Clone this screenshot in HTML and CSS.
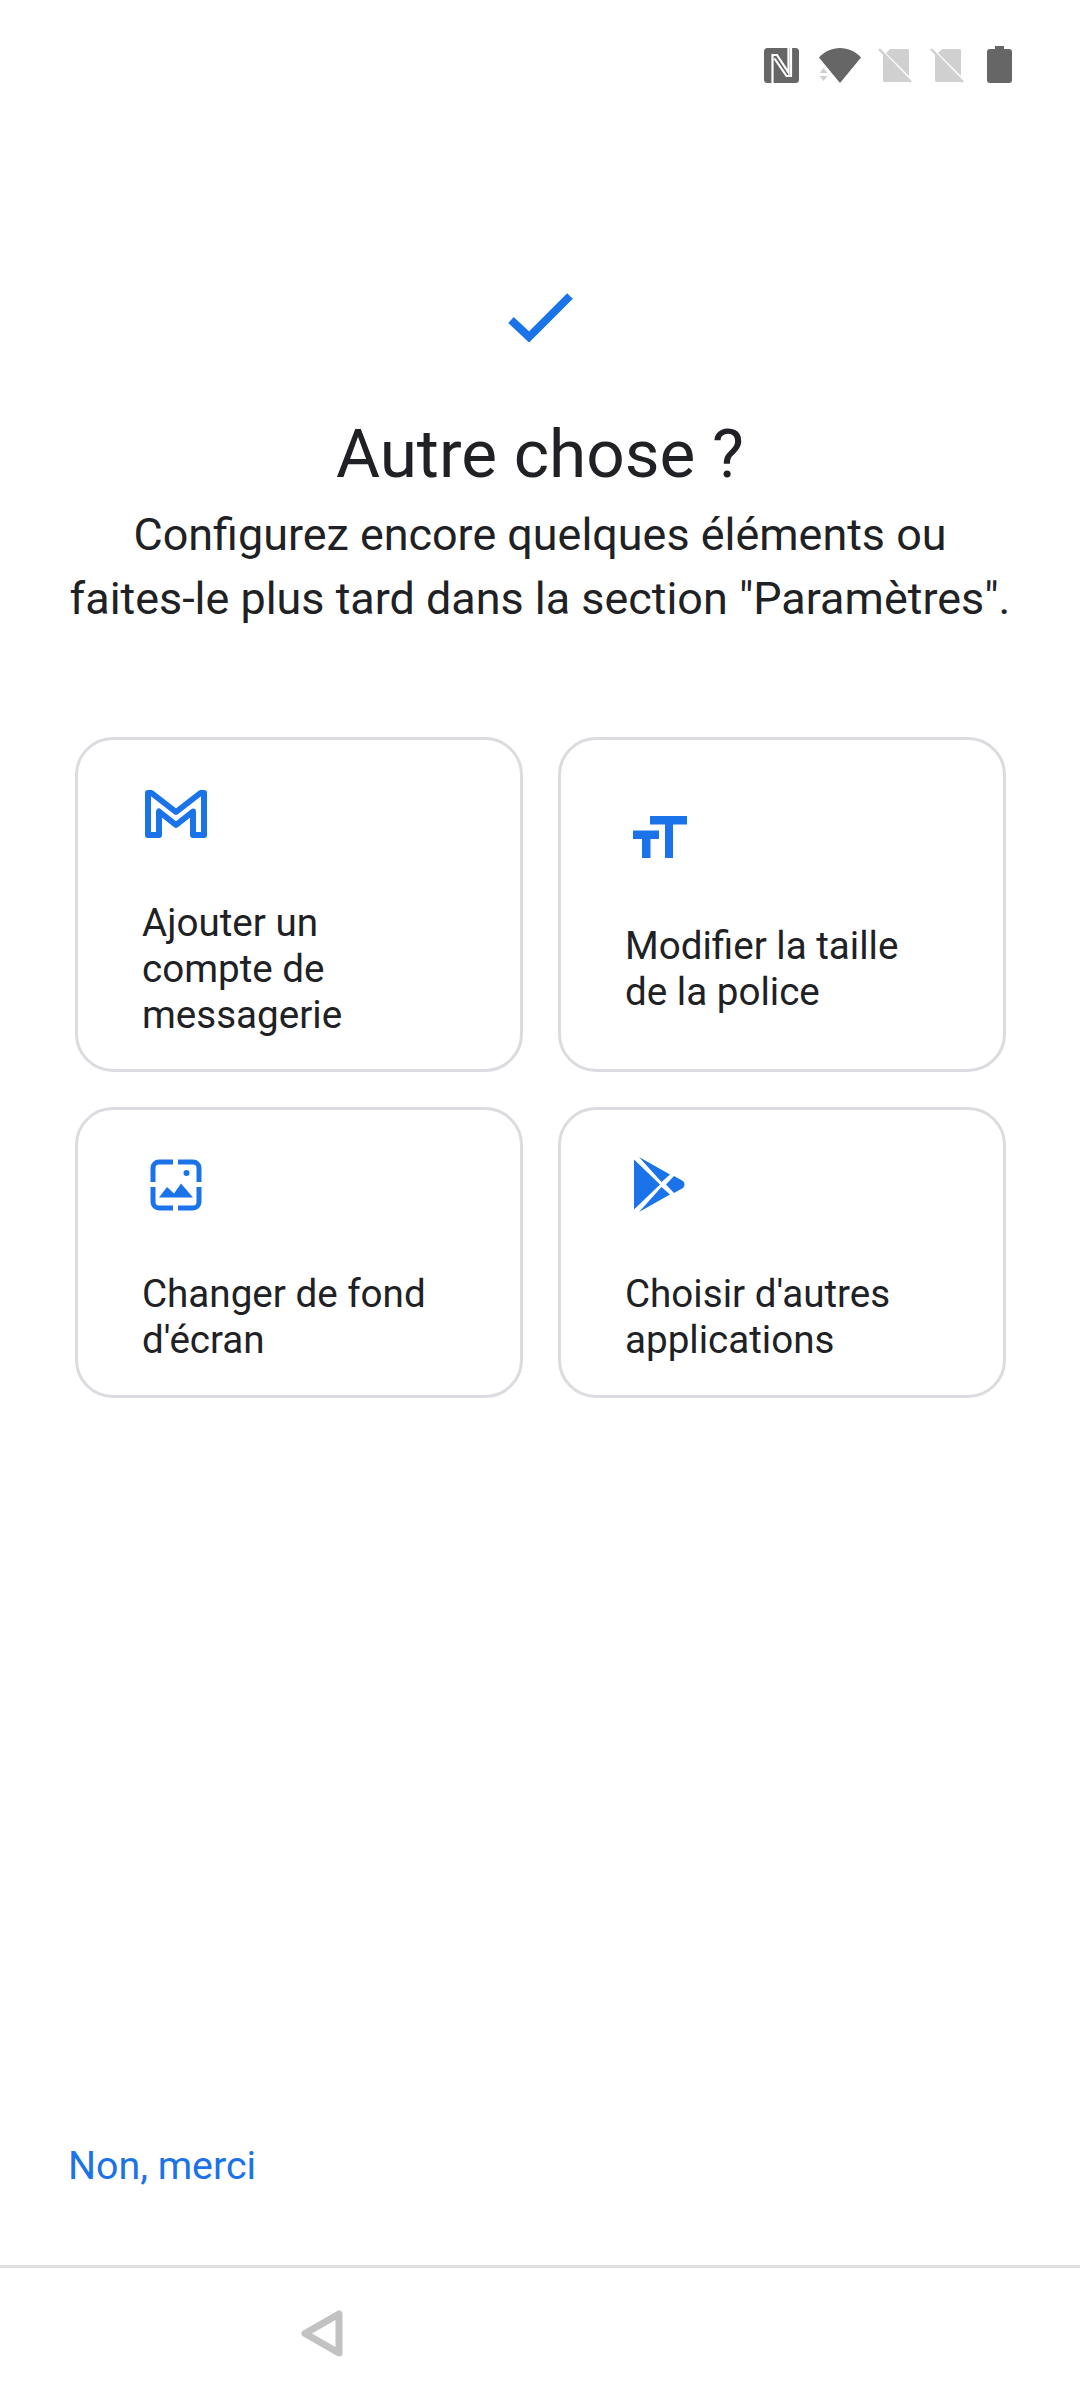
FILE: index.html
```html
<!DOCTYPE html>
<html lang="fr">
<head>
<meta charset="utf-8">
<title>Autre chose ?</title>
<link rel="stylesheet" href="styles.css">
</head>
<body>
<div class="page">
  <header class="status">
    <svg class="st st-nfc" viewBox="0 0 35 35"><rect width="35" height="35" rx="3.500" fill="#666"/><path fill="none" stroke="#fff" stroke-width="2.200" d="M8.500 35V7H13L24.500 24.500V0M27 0V28H22.500L10.500 10.500"/></svg>
    <svg class="st st-wifi" viewBox="0 0 42 35"><path fill="#666" d="M0 9.500C5.500 3.500 13 0 21 0s15.500 3.500 21 9.500L21 35Z"/><path fill="#d0d0d0" d="M.500 25 4.500 20 8.500 25ZM.500 28H8.500L4.500 33Z"/></svg>
    <svg class="st st-sim" viewBox="0 0 34 36"><path fill="#d0d0d0" d="M12 2H30L31 3V29L8 6ZM5 7 32 35H6L5 34Z"/><path stroke="#d0d0d0" stroke-width="2.500" d="M1 2 33 35"/></svg>
    <svg class="st st-sim" viewBox="0 0 34 36"><path fill="#d0d0d0" d="M12 2H30L31 3V29L8 6ZM5 7 32 35H6L5 34Z"/><path stroke="#d0d0d0" stroke-width="2.500" d="M1 2 33 35"/></svg>
    <svg class="st st-bat" viewBox="0 0 25 37"><path fill="#666" d="M8 0h9v3h5a3 3 0 0 1 3 3v28a3 3 0 0 1-3 3H3a3 3 0 0 1-3-3V6a3 3 0 0 1 3-3h5Z"/></svg>
  </header>

  <main class="main">
    <section class="hero">
      <svg class="check" viewBox="0 0 65 50"><path fill="none" stroke="#1a73e8" stroke-width="8" d="M3 28 21 45 62 4"/></svg>
      <h1 class="title">Autre chose ?</h1>
      <p class="subtitle">Configurez encore quelques éléments ou<br>faites-le plus tard dans la section "Paramètres".</p>
    </section>

    <section class="grid">
      <a class="card">
        <span class="icon"><svg width="62" height="48" viewBox="0 0 62 48"><path fill="none" stroke="#1a73e8" stroke-width="6" stroke-linejoin="round" d="M3 45V3H6.500L31 22 55.500 3H59V45H48V21.500L31 35 14 21.500V45Z"/></svg></span>
        <span class="label">Ajouter un<br>compte de<br>messagerie</span>
      </a>
      <a class="card">
        <span class="icon"><svg width="54" height="42" viewBox="0 0 54 42"><path fill="#1a73e8" d="M17 0H54V8.500H40V42H32V8.500H17ZM0 14.500H26V23H17.500V42H9V23H0Z"/></svg></span>
        <span class="label">Modifier la taille<br>de la police</span>
      </a>
      <a class="card">
        <span class="icon"><svg width="52" height="52" viewBox="0 0 52 52"><path fill="none" stroke="#1a73e8" stroke-width="5" d="M23 3H9a6 6 0 0 0-6 6V23M28 3H43a6 6 0 0 1 6 6V23M3 28V43a6 6 0 0 0 6 6H23M49 28V43a6 6 0 0 1-6 6H28"/><circle cx="36.500" cy="14" r="3" fill="#1a73e8"/><path fill="#1a73e8" d="M9 38.500 17 28 24 34.500 31 24.500 43 38.500Z"/></svg></span>
        <span class="label">Changer de fond<br>d'écran</span>
      </a>
      <a class="card">
        <span class="icon"><svg width="52" height="56" viewBox="0 0 52 56"><path fill="#1a73e8" d="M0 2.500 26 27.500 0 52.500ZM5 0 36 17.500 27.500 25ZM27.500 30 36 37.500 5 55ZM40 19 49 24Q52 27.500 49 31L40 36 32 27.500Z"/></svg></span>
        <span class="label">Choisir d'autres<br>applications</span>
      </a>
    </section>
  </main>

  <footer class="actions"><a class="skip">Non, merci</a></footer>

  <nav class="nav">
    <svg class="back" width="42" height="47" viewBox="0 0 42 47"><path fill="none" stroke="#c2c2c2" stroke-width="7" stroke-linejoin="round" d="M4 23.500 38 4V43Z"/></svg>
  </nav>
</div>
</body>
</html>
```
FILE: styles.css
```css
* { box-sizing: border-box; }
html, body { margin: 0; padding: 0; background: #fff; }
body { font-family: Roboto, "Noto Sans", sans-serif; color: #202124; }
.page { width: 1080px; height: 2400px; display: flex; flex-direction: column; overflow: hidden; }

.status { height: 92px; padding: 46px 68px 0 0; display: flex; justify-content: flex-end; align-items: flex-start; }
.st { display: block; flex: none; height: 35px; }
.st-nfc { width: 35px; margin-top: 2px; }
.st-wifi { width: 42px; margin-left: 20px; margin-top: 2px; }
.st-sim { width: 34px; height: 36px; margin-left: 17px; margin-top: 1px; }
.st-sim + .st-sim { margin-left: 18px; }
.st-bat { width: 25px; height: 37px; margin-left: 23px; }

.main { flex: 1; display: flex; flex-direction: column; }
.hero { display: flex; flex-direction: column; align-items: center; padding-top: 200px; text-align: center; }
.check { display: block; width: 65px; height: 50px; }
.title { margin: 67px 0 0; font-size: 67.500px; line-height: 90px; font-weight: 400; }
.subtitle { margin: 4px 0 0; font-size: 44.900px; line-height: 64px; }

.grid { margin: 106px 0 0 75px; width: 931px; display: grid; grid-template-columns: 448px 448px; grid-template-rows: 335px 291px; gap: 35px; }
.card { display: flex; flex-direction: column; justify-content: center; padding: 38px 40px 31px 64px; border: 3px solid #dadce0; border-radius: 38px; }
.icon { height: 72px; margin-left: -2px; width: 72px; display: flex; align-items: center; justify-content: center; }
.card:nth-child(even) .icon { margin-left: -1px; }
.label { display: block; margin-top: 50px; font-size: 38.600px; line-height: 46px; }

.actions { padding: 0 0 76px 68px; }
.skip { font-size: 39.300px; line-height: 46px; color: #1a73e8; }
.nav { height: 135px; border-top: 3px solid #e0e0e0; padding: 42px 0 0 301px; }
.back { display: block; }
```
